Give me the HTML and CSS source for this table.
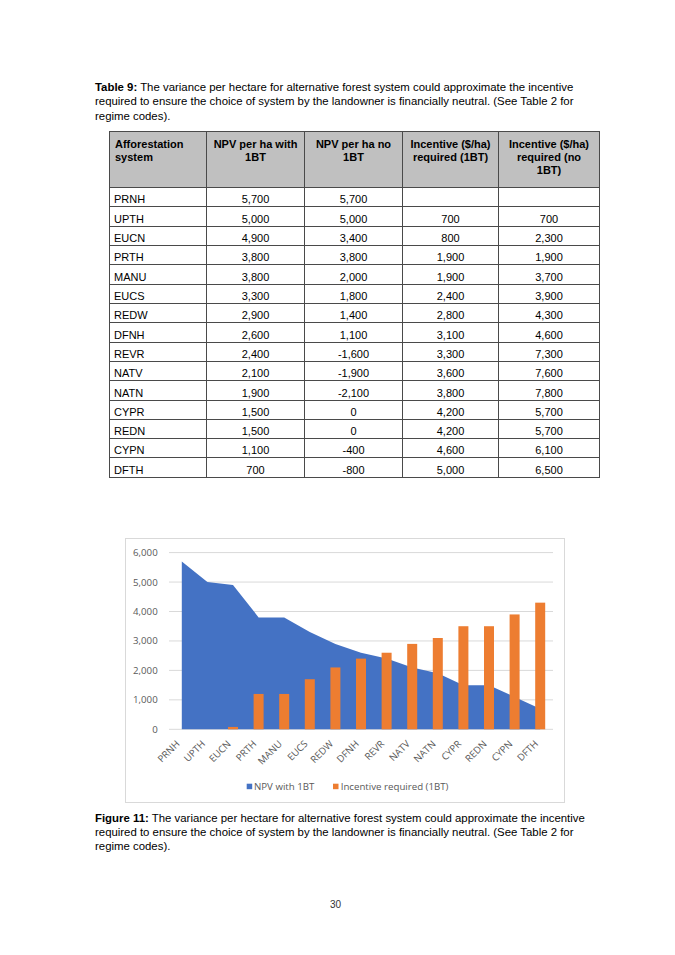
FILE: index.html
```html
<!DOCTYPE html>
<html lang="en">
<head>
<meta charset="utf-8">
<title>Table 9 and Figure 11</title>
<link rel="stylesheet" href="styles.css">
</head>
<body>
<div class="page">
  <p class="caption"><b>Table 9:</b> The variance per hectare for alternative forest system could approximate the incentive required to ensure the choice of system by the landowner is financially neutral. (See Table 2 for regime codes).</p>

  <table class="data">
    <colgroup>
      <col class="c1"><col class="c2"><col class="c3"><col class="c4"><col class="c5">
    </colgroup>
    <thead>
      <tr>
        <th class="first">Afforestation<br>system</th>
        <th>NPV per ha with<br>1BT</th>
        <th>NPV per ha no<br>1BT</th>
        <th>Incentive ($/ha)<br>required (1BT)</th>
        <th>Incentive ($/ha)<br>required (no<br>1BT)</th>
      </tr>
    </thead>
    <tbody>
      <tr><td>PRNH</td><td>5,700</td><td>5,700</td><td></td><td></td></tr>
      <tr><td>UPTH</td><td>5,000</td><td>5,000</td><td>700</td><td>700</td></tr>
      <tr><td>EUCN</td><td>4,900</td><td>3,400</td><td>800</td><td>2,300</td></tr>
      <tr><td>PRTH</td><td>3,800</td><td>3,800</td><td>1,900</td><td>1,900</td></tr>
      <tr><td>MANU</td><td>3,800</td><td>2,000</td><td>1,900</td><td>3,700</td></tr>
      <tr><td>EUCS</td><td>3,300</td><td>1,800</td><td>2,400</td><td>3,900</td></tr>
      <tr><td>REDW</td><td>2,900</td><td>1,400</td><td>2,800</td><td>4,300</td></tr>
      <tr><td>DFNH</td><td>2,600</td><td>1,100</td><td>3,100</td><td>4,600</td></tr>
      <tr><td>REVR</td><td>2,400</td><td>-1,600</td><td>3,300</td><td>7,300</td></tr>
      <tr><td>NATV</td><td>2,100</td><td>-1,900</td><td>3,600</td><td>7,600</td></tr>
      <tr><td>NATN</td><td>1,900</td><td>-2,100</td><td>3,800</td><td>7,800</td></tr>
      <tr><td>CYPR</td><td>1,500</td><td>0</td><td>4,200</td><td>5,700</td></tr>
      <tr><td>REDN</td><td>1,500</td><td>0</td><td>4,200</td><td>5,700</td></tr>
      <tr><td>CYPN</td><td>1,100</td><td>-400</td><td>4,600</td><td>6,100</td></tr>
      <tr><td>DFTH</td><td>700</td><td>-800</td><td>5,000</td><td>6,500</td></tr>
    </tbody>
  </table>

  <div class="chart">
    <svg class="chart-svg" width="438" height="263" viewBox="0 0 438 263" xmlns="http://www.w3.org/2000/svg">
      <g class="grid">
        <line x1="43" y1="13.6" x2="427" y2="13.6"/>
        <line x1="43" y1="43.05" x2="427" y2="43.05"/>
        <line x1="43" y1="72.5" x2="427" y2="72.5"/>
        <line x1="43" y1="101.95" x2="427" y2="101.95"/>
        <line x1="43" y1="131.4" x2="427" y2="131.4"/>
        <line x1="43" y1="160.85" x2="427" y2="160.85"/>
        <line x1="43" y1="190.3" x2="427" y2="190.3"/>
      </g>
      <g class="ylabels">
        <text x="31.7" y="17">6,000</text>
        <text x="31.7" y="46.5">5,000</text>
        <text x="31.7" y="76">4,000</text>
        <text x="31.7" y="105.4">3,000</text>
        <text x="31.7" y="134.9">2,000</text>
        <text x="31.7" y="164.3">1,000</text>
        <text x="31.7" y="193.8">0</text>
      </g>
      <path class="area" d="M55.8,190.3 L55.8,22.43 L81.4,43.05 L107,45.99 L132.6,78.39 L158.2,78.39 L183.8,93.12 L209.4,104.9 L235,113.73 L260.6,119.62 L286.2,128.46 L311.8,134.35 L337.4,146.13 L363,146.13 L388.6,157.91 L414.2,169.69 L414.2,190.3 Z"/>
      <g class="bars">
        <rect x="102" y="187.94" width="10" height="2.36"/>
        <rect x="127.6" y="154.96" width="10" height="35.34"/>
        <rect x="153.2" y="154.96" width="10" height="35.34"/>
        <rect x="178.8" y="140.23" width="10" height="50.07"/>
        <rect x="204.4" y="128.45" width="10" height="61.85"/>
        <rect x="230" y="119.62" width="10" height="70.68"/>
        <rect x="255.6" y="113.73" width="10" height="76.57"/>
        <rect x="281.2" y="104.89" width="10" height="85.41"/>
        <rect x="306.8" y="99" width="10" height="91.3"/>
        <rect x="332.4" y="87.22" width="10" height="103.08"/>
        <rect x="358" y="87.22" width="10" height="103.08"/>
        <rect x="383.6" y="75.44" width="10" height="114.86"/>
        <rect x="409.2" y="63.66" width="10" height="126.64"/>
      </g>
      <g class="xlabels">
        <text transform="translate(54.3 205.5) rotate(-45)">PRNH</text>
        <text transform="translate(79.9 205.5) rotate(-45)">UPTH</text>
        <text transform="translate(105.5 205.5) rotate(-45)">EUCN</text>
        <text transform="translate(131.1 205.5) rotate(-45)">PRTH</text>
        <text transform="translate(156.7 205.5) rotate(-45)">MANU</text>
        <text transform="translate(182.3 205.5) rotate(-45)">EUCS</text>
        <text transform="translate(207.9 205.5) rotate(-45)">REDW</text>
        <text transform="translate(233.5 205.5) rotate(-45)">DFNH</text>
        <text transform="translate(259.1 205.5) rotate(-45)">REVR</text>
        <text transform="translate(284.7 205.5) rotate(-45)">NATV</text>
        <text transform="translate(310.3 205.5) rotate(-45)">NATN</text>
        <text transform="translate(335.9 205.5) rotate(-45)">CYPR</text>
        <text transform="translate(361.5 205.5) rotate(-45)">REDN</text>
        <text transform="translate(387.1 205.5) rotate(-45)">CYPN</text>
        <text transform="translate(412.7 205.5) rotate(-45)">DFTH</text>
      </g>
      <g class="legend">
        <rect class="sw-blue" x="120.7" y="244.7" width="5.5" height="5.5"/>
        <text x="128" y="251">NPV with 1BT</text>
        <rect class="sw-orange" x="207" y="244.7" width="5.5" height="5.5"/>
        <text x="214.7" y="251">Incentive required (1BT)</text>
      </g>
    </svg>
  </div>

  <p class="fig-caption"><b>Figure 11:</b> The variance per hectare for alternative forest system could approximate the incentive required to ensure the choice of system by the landowner is financially neutral. (See Table 2 for regime codes).</p>

  <p class="pagenum">30</p>
</div>
</body>
</html>
```
FILE: styles.css
```css
html, body {
  margin: 0;
  padding: 0;
  background: #ffffff;
}

.page {
  width: 675px;
  padding-top: 80px;
  font-family: "Liberation Sans", Arial, sans-serif;
  color: #000000;
}

.caption,
.fig-caption {
  margin: 0 0 0 95px;
  width: 490px;
  font-size: 11.4px;
  line-height: 14.3px;
}

.caption b,
.fig-caption b {
  font-weight: bold;
}

.data {
  margin: 8px 0 0 109px;
  border-collapse: collapse;
  table-layout: fixed;
  width: 490px;
  font-size: 11px;
  line-height: 13px;
}

.data .c1 { width: 97px; }
.data .c2 { width: 98px; }
.data .c3 { width: 98px; }
.data .c4 { width: 96px; }
.data .c5 { width: 101px; }

.data th,
.data td {
  border: 1px solid #4a4a4a;
  padding: 0 4px;
}

.data th {
  background: #c0c0c0;
  font-weight: bold;
  text-align: center;
  vertical-align: top;
  height: 49px;
  padding-top: 6px;
}

.data th.first {
  text-align: left;
  padding-left: 5px;
}

.data tbody tr {
  height: 19.33px;
}

.data td {
  text-align: center;
  vertical-align: bottom;
  padding-bottom: 0;
}

.data td:first-child {
  text-align: left;
}

.chart {
  margin: 60px 0 0 125px;
  width: 438px;
  height: 263px;
  border: 1px solid #d9d9d9;
}

.chart-svg {
  display: block;
  font-family: "Open Sans", "Noto Sans", sans-serif;
}

.grid line {
  stroke: #d9d9d9;
  stroke-width: 1;
}

.ylabels text {
  font-size: 9.7px;
  fill: #595959;
  text-anchor: end;
}

.xlabels text {
  font-size: 9.7px;
  fill: #595959;
  text-anchor: end;
}

.area {
  fill: #4472c4;
}

.bars rect {
  fill: #ed7d31;
}

.legend text {
  font-size: 9.7px;
  fill: #595959;
}

.sw-blue { fill: #4472c4; }
.sw-orange { fill: #ed7d31; }

.fig-caption {
  margin-top: 8px;
}

.pagenum {
  margin: 45px 0 0 0;
  text-align: center;
  font-size: 10px;
  line-height: 12px;
  color: #333333;
  padding-right: 4px;
}
```
